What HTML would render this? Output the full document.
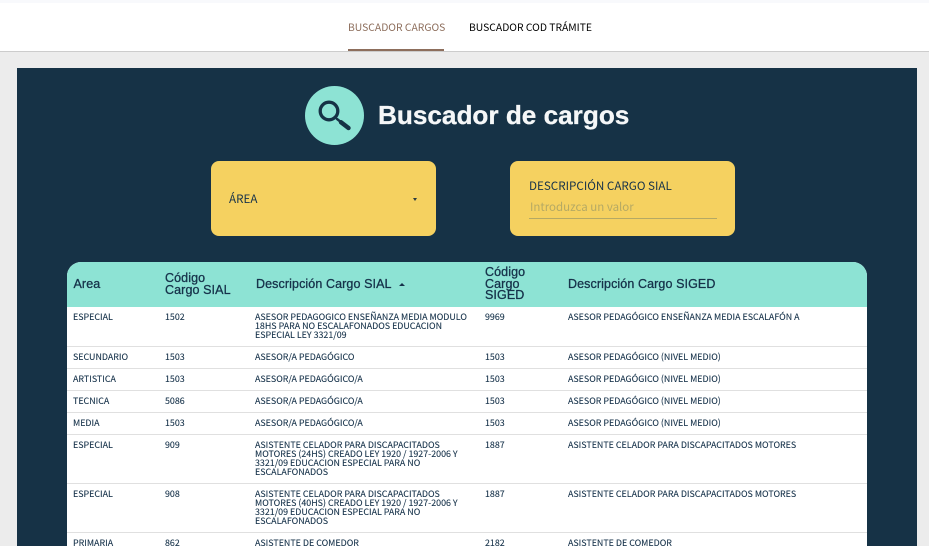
<!DOCTYPE html>
<html><head><meta charset="utf-8"><style>
html,body{margin:0;padding:0}
body{width:929px;height:546px;overflow:hidden;position:relative;background:#ececec;font-family:"Noto Sans CJK JP","Liberation Sans",sans-serif}
div,span,svg{position:absolute}
.t{white-space:nowrap;font-size:8.9px;line-height:8.85px;color:#16324a}
div .t{margin-top:1px;-webkit-text-stroke:.1px #16324a}
.h{white-space:nowrap;font-family:"Liberation Sans",sans-serif;font-size:12.5px;line-height:11.7px;color:#16324a;letter-spacing:.1px;-webkit-text-stroke:.3px #16324a}
.l{left:0;width:800px;height:1px;background:#e0e0e0}
.nav{white-space:nowrap;font-size:10.35px;line-height:14px}
</style></head><body>
<div style="left:0;top:0;width:929px;height:3px;background:#f8f9fc"></div>
<div style="left:0;top:3px;width:929px;height:48px;background:#fff"></div>
<div style="left:0;top:51px;width:929px;height:1px;background:#ccc"></div>
<div class="nav" style="left:348px;top:20px;color:#8d6e5c">BUSCADOR CARGOS</div>
<div style="left:348px;top:49px;width:96px;height:2px;background:#8d6e5c"></div>
<div class="nav" style="left:469px;top:20px;color:#000">BUSCADOR COD TRÁMITE</div>

<div style="left:17px;top:68px;width:900px;height:478px;background:#163246"></div>
<div style="left:305px;top:86px;width:59px;height:59px;border-radius:50%;background:#8de3d4"></div>
<svg style="left:305px;top:86px" width="59" height="59" viewBox="0 0 59 59"><circle cx="24" cy="25" r="8.800" fill="none" stroke="#163246" stroke-width="3.300"/><path d="M32 33L43.500 42" stroke="#163246" stroke-width="2.400" stroke-linecap="round"/><path d="M36 36.200L43.500 42" stroke="#163246" stroke-width="4.400" stroke-linecap="round"/></svg>
<div style="left:378px;top:98px;white-space:nowrap;font-family:'Liberation Sans',sans-serif;font-weight:bold;font-size:26.150px;line-height:34px;color:#f5f7f8;-webkit-text-stroke:.3px #f5f7f8">Buscador de cargos</div>

<div style="left:211px;top:161px;width:225px;height:75px;border-radius:8px;background:#f5d160"></div>
<div class="t" style="left:229px;top:192px;font-size:11.650px;line-height:14px">ÁREA</div>
<div style="left:413px;top:197.500px;width:0;height:0;border-left:2.500px solid transparent;border-right:2.500px solid transparent;border-top:3px solid #2a3a40"></div>
<div style="left:510px;top:161px;width:225px;height:75px;border-radius:8px;background:#f5d160"></div>
<div class="t" style="left:529px;top:179px;font-size:11.650px;line-height:14px">DESCRIPCIÓN CARGO SIAL</div>
<div class="t" style="left:530px;top:200px;font-size:11.500px;line-height:14px;color:#b5a964">Introduzca un valor</div>
<div style="left:529px;top:218px;width:188px;height:1px;background:#b5a964"></div>

<div style="left:67px;top:262px;width:800px;height:284px;background:#fff;border-radius:14px 14px 0 0;overflow:hidden">
<div style="left:0;top:0;width:800px;height:45px;background:#8de3d4"></div>
<div class="h" style="left:6.500px;top:17px">Area</div>
<div class="h" style="left:98px;top:11px">Código<br>Cargo SIAL</div>
<div class="h" style="left:189px;top:17px">Descripción Cargo SIAL</div>
<div style="left:332px;top:21px;width:0;height:0;border-left:3px solid transparent;border-right:3px solid transparent;border-bottom:3px solid #16324a"></div>
<div class="h" style="left:418px;top:5px">Código<br>Cargo<br>SIGED</div>
<div class="h" style="left:501px;top:17px">Descripción Cargo SIGED</div>

<div class="t" style="left:6px;top:50px">ESPECIAL</div><div class="t" style="left:98px;top:50px">1502</div>
<div class="t" style="left:188px;top:50px">ASESOR PEDAGOGICO ENSEÑANZA MEDIA MODULO<br>18HS PARA NO ESCALAFONADOS EDUCACION<br>ESPECIAL LEY 3321/09</div>
<div class="t" style="left:418px;top:50px">9969</div><div class="t" style="left:501px;top:50px">ASESOR PEDAGÓGICO ENSEÑANZA MEDIA ESCALAFÓN A</div>
<div class="l" style="top:84px"></div>

<div class="t" style="left:6px;top:90px">SECUNDARIO</div><div class="t" style="left:98px;top:90px">1503</div><div class="t" style="left:188px;top:90px">ASESOR/A PEDAGÓGICO</div><div class="t" style="left:418px;top:90px">1503</div><div class="t" style="left:501px;top:90px">ASESOR PEDAGÓGICO (NIVEL MEDIO)</div>
<div class="l" style="top:106px"></div>

<div class="t" style="left:6px;top:112px">ARTISTICA</div><div class="t" style="left:98px;top:112px">1503</div><div class="t" style="left:188px;top:112px">ASESOR/A PEDAGÓGICO/A</div><div class="t" style="left:418px;top:112px">1503</div><div class="t" style="left:501px;top:112px">ASESOR PEDAGÓGICO (NIVEL MEDIO)</div>
<div class="l" style="top:128px"></div>

<div class="t" style="left:6px;top:134px">TECNICA</div><div class="t" style="left:98px;top:134px">5086</div><div class="t" style="left:188px;top:134px">ASESOR/A PEDAGÓGICO/A</div><div class="t" style="left:418px;top:134px">1503</div><div class="t" style="left:501px;top:134px">ASESOR PEDAGÓGICO (NIVEL MEDIO)</div>
<div class="l" style="top:150px"></div>

<div class="t" style="left:6px;top:156px">MEDIA</div><div class="t" style="left:98px;top:156px">1503</div><div class="t" style="left:188px;top:156px">ASESOR/A PEDAGÓGICO/A</div><div class="t" style="left:418px;top:156px">1503</div><div class="t" style="left:501px;top:156px">ASESOR PEDAGÓGICO (NIVEL MEDIO)</div>
<div class="l" style="top:172px"></div>

<div class="t" style="left:6px;top:178px">ESPECIAL</div><div class="t" style="left:98px;top:178px">909</div>
<div class="t" style="left:188px;top:178px">ASISTENTE CELADOR PARA DISCAPACITADOS<br>MOTORES (24HS) CREADO LEY 1920 / 1927-2006 Y<br>3321/09 EDUCACION ESPECIAL PARA NO<br>ESCALAFONADOS</div>
<div class="t" style="left:418px;top:178px">1887</div><div class="t" style="left:501px;top:178px">ASISTENTE CELADOR PARA DISCAPACITADOS MOTORES</div>
<div class="l" style="top:221px"></div>

<div class="t" style="left:6px;top:227px">ESPECIAL</div><div class="t" style="left:98px;top:227px">908</div>
<div class="t" style="left:188px;top:227px">ASISTENTE CELADOR PARA DISCAPACITADOS<br>MOTORES (40HS) CREADO LEY 1920 / 1927-2006 Y<br>3321/09 EDUCACION ESPECIAL PARA NO<br>ESCALAFONADOS</div>
<div class="t" style="left:418px;top:227px">1887</div><div class="t" style="left:501px;top:227px">ASISTENTE CELADOR PARA DISCAPACITADOS MOTORES</div>
<div class="l" style="top:270px"></div>

<div class="t" style="left:6px;top:276px">PRIMARIA</div><div class="t" style="left:98px;top:276px">862</div><div class="t" style="left:188px;top:276px">ASISTENTE DE COMEDOR</div><div class="t" style="left:418px;top:276px">2182</div><div class="t" style="left:501px;top:276px">ASISTENTE DE COMEDOR</div>
</div>
</body></html>
